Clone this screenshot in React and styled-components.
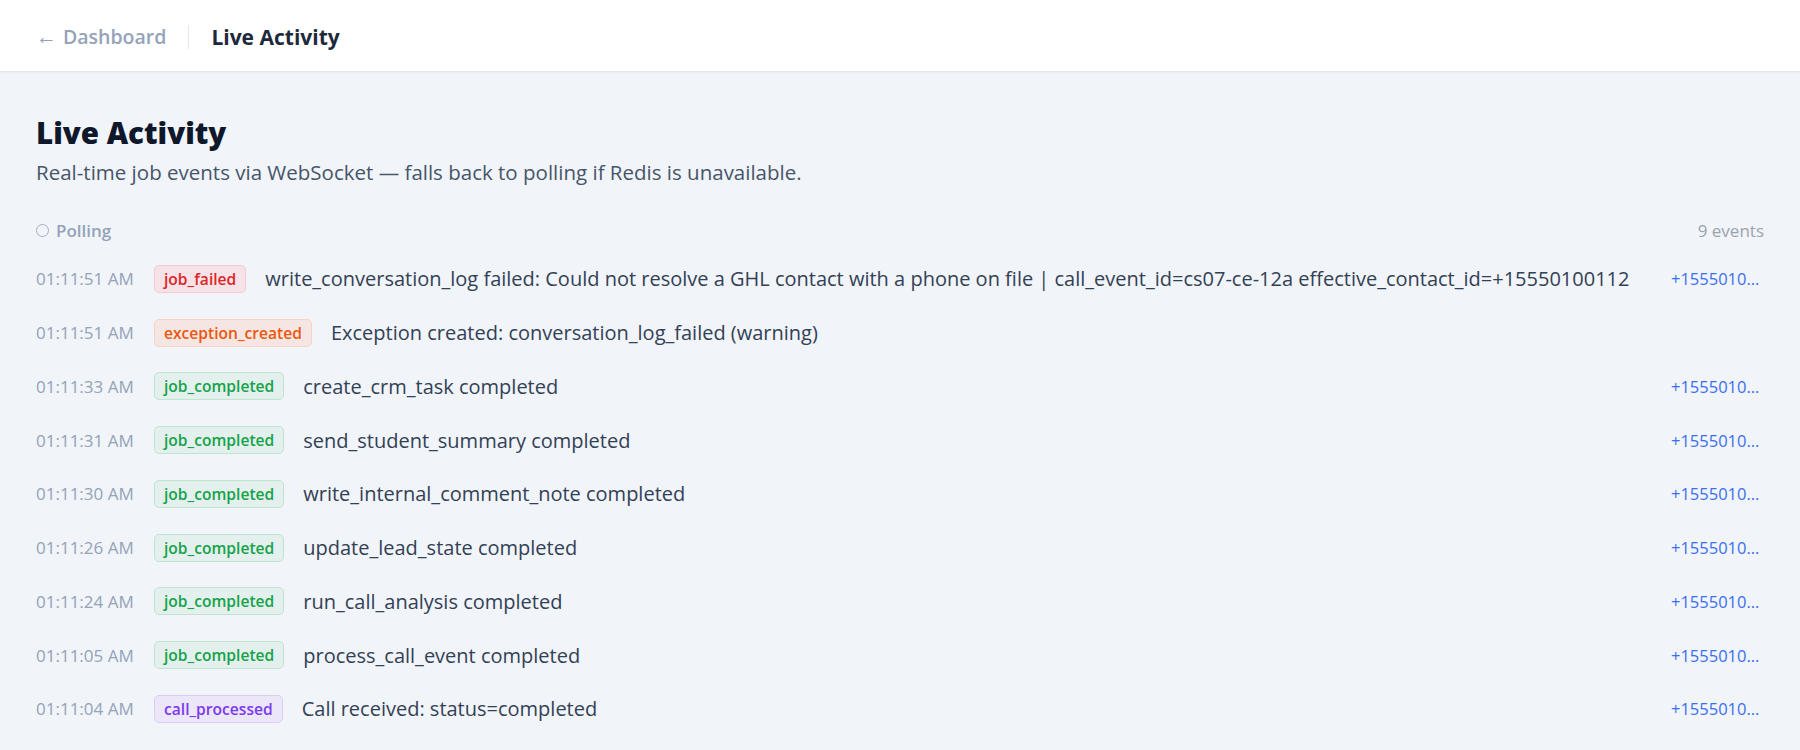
import React from "react";
import styled, { createGlobalStyle } from "styled-components";

const Global = createGlobalStyle`
  html, body { margin: 0; padding: 0; }
  body {
    background: #f1f4f9;
    font-family: "Segoe UI", "Open Sans", "Noto Sans", sans-serif;
    color: #1e293b;
  }
`;

const TopBar = styled.header`
  height: 72px;
  box-sizing: border-box;
  background: #ffffff;
  border-bottom: 1px solid #e2e8f0;
  box-shadow: 0 1px 2px rgba(15, 23, 42, 0.04);
  display: flex;
  align-items: center;
  padding: 2px 36px 0;
`;

const BackLink = styled.a`
  color: #94a3b8;
  font-size: 19.5px;
  font-weight: 600;
  text-decoration: none;
  display: flex;
  align-items: center;
  gap: 6px;
`;

const Arrow = styled.span`
  font-weight: 400;
  font-size: 21px;
  line-height: 1;
`;

const Divider = styled.span`
  width: 1px;
  height: 24px;
  background: #e2e8f0;
  margin: 0 22px;
`;

const TopTitle = styled.span`
  font-size: 21px;
  font-weight: 700;
  color: #1e293b;
`;

const Main = styled.main`
  padding: 42px 36px 0;
`;

const Title = styled.h1`
  margin: 0;
  font-size: 29.5px;
  line-height: 38px;
  font-weight: 800;
  color: #0f172a;
`;

const Subtitle = styled.p`
  margin: 6px 0 0;
  font-size: 20.5px;
  line-height: 28px;
  color: #475569;
`;

const StatusBar = styled.div`
  margin-top: 30px;
  display: flex;
  align-items: center;
  justify-content: space-between;
  height: 28px;
`;

const Status = styled.div`
  display: flex;
  align-items: center;
  gap: 7px;
  color: #94a3b8;
  font-size: 17px;
  font-weight: 600;
`;

const Ring = styled.span`
  box-sizing: border-box;
  width: 13px;
  height: 13px;
  border: 1.5px solid #a3afc2;
  border-radius: 50%;
`;

const Count = styled.span`
  color: #9ca3af;
  font-size: 17px;
`;

const List = styled.ul`
  list-style: none;
  margin: 8px 0 0;
  padding: 0;
`;

const Row = styled.li`
  height: 53.75px;
  display: flex;
  align-items: center;
  gap: 19px;
`;

const Time = styled.span`
  flex: none;
  width: 99px;
  color: #94a3b8;
  font-size: 17px;
  white-space: nowrap;
`;

const tones = {
  red: { bg: "#f5e3e7", border: "#f6c9cf", fg: "#dc2626" },
  orange: { bg: "#f5e6e4", border: "#f8d2c2", fg: "#ea580c" },
  green: { bg: "#e3f0ee", border: "#bfe5cf", fg: "#16a34a" },
  purple: { bg: "#ebe7f9", border: "#dccdf8", fg: "#7c3aed" },
};

const Badge = styled.span`
  flex: none;
  box-sizing: border-box;
  height: 28px;
  padding: 0 9px;
  display: inline-flex;
  align-items: center;
  border-radius: 5px;
  font-size: 15.6px;
  font-weight: 600;
  background: ${(p) => tones[p.$tone].bg};
  border: 1px solid ${(p) => tones[p.$tone].border};
  color: ${(p) => tones[p.$tone].fg};
`;

const Message = styled.span`
  flex: 1;
  min-width: 0;
  font-size: 20px;
  color: #334155;
  white-space: nowrap;
  overflow: hidden;
  text-overflow: ellipsis;
`;

const Phone = styled.a`
  flex: none;
  max-width: 93px;
  margin-left: 21px;
  color: #3b6ff0;
  font-size: 16.5px;
  text-decoration: none;
  white-space: nowrap;
  overflow: hidden;
  text-overflow: ellipsis;
`;

const events = [
  { t: "01:11:51 AM", type: "job_failed", tone: "red", msg: "write_conversation_log failed: Could not resolve a GHL contact with a phone on file | call_event_id=cs07-ce-12a effective_contact_id=+15550100112", phone: "+15550100112" },
  { t: "01:11:51 AM", type: "exception_created", tone: "orange", msg: "Exception created: conversation_log_failed (warning)" },
  { t: "01:11:33 AM", type: "job_completed", tone: "green", msg: "create_crm_task completed", phone: "+15550100112" },
  { t: "01:11:31 AM", type: "job_completed", tone: "green", msg: "send_student_summary completed", phone: "+15550100112" },
  { t: "01:11:30 AM", type: "job_completed", tone: "green", msg: "write_internal_comment_note completed", phone: "+15550100112" },
  { t: "01:11:26 AM", type: "job_completed", tone: "green", msg: "update_lead_state completed", phone: "+15550100112" },
  { t: "01:11:24 AM", type: "job_completed", tone: "green", msg: "run_call_analysis completed", phone: "+15550100112" },
  { t: "01:11:05 AM", type: "job_completed", tone: "green", msg: "process_call_event completed", phone: "+15550100112" },
  { t: "01:11:04 AM", type: "call_processed", tone: "purple", msg: "Call received: status=completed", phone: "+15550100112" },
];

export default function App() {
  return (
    <>
      <Global />
      <TopBar>
        <BackLink href="#">
          <Arrow>←</Arrow> Dashboard
        </BackLink>
        <Divider />
        <TopTitle>Live Activity</TopTitle>
      </TopBar>
      <Main>
        <Title>Live Activity</Title>
        <Subtitle>
          Real-time job events via WebSocket — falls back to polling if Redis is unavailable.
        </Subtitle>
        <StatusBar>
          <Status>
            <Ring />
            Polling
          </Status>
          <Count>9 events</Count>
        </StatusBar>
        <List>
          {events.map((e, i) => (
            <Row key={i}>
              <Time>{e.t}</Time>
              <Badge $tone={e.tone}>{e.type}</Badge>
              <Message>{e.msg}</Message>
              {e.phone && <Phone href="#">{e.phone}</Phone>}
            </Row>
          ))}
        </List>
      </Main>
    </>
  );
}
